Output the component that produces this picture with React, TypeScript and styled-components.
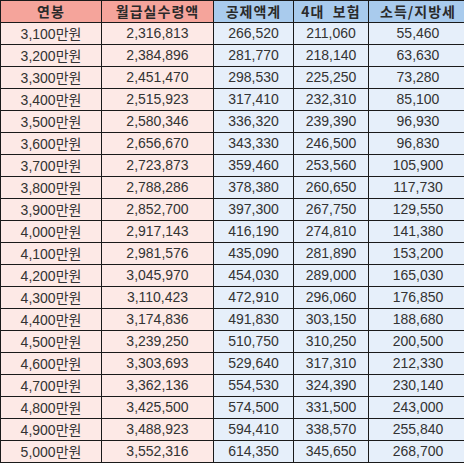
import React from "react";
import styled, { createGlobalStyle } from "styled-components";

const Global = createGlobalStyle`
  html, body { margin: 0; padding: 0; background: #ffffff; }
  body { font-family: "Liberation Sans", Arial, "Noto Sans CJK KR", sans-serif; }
`;

const Table = styled.table`
  border-collapse: collapse;
  table-layout: fixed;
  width: 463px;
  font-size: 14px;
`;

const HeadCell = styled.th<{ $tone: "red" | "blue"; $w: number }>`
  width: ${(p) => p.$w}px;
  height: 21px;
  padding: 0;
  border: 1px solid #1a1a1a;
  background: ${(p) => (p.$tone === "red" ? "#f5a49b" : "#a9cbed")};
  color: #2a2a2a;
  font-family: "Noto Sans CJK KR", "Liberation Sans", sans-serif;
  font-weight: 700;
  font-size: 14px;
  letter-spacing: 1px;
  text-align: center;
  line-height: 19px;
  white-space: pre;
`;

const Cell = styled.td<{ $tone: "red" | "blue" }>`
  height: 21px;
  padding: 0;
  border: 1px solid #1a1a1a;
  background: ${(p) => (p.$tone === "red" ? "#fde9e6" : "#e6effa")};
  color: #333333;
  text-align: center;
  line-height: 19px;
  font-family: "Liberation Sans", Arial, "Noto Sans CJK KR", sans-serif;
  font-size: 14px;
`;

const Unit = styled.span`
  font-family: "Noto Sans CJK KR", sans-serif;
  font-size: 14px;
  letter-spacing: 0px;
`;

const rows: [string, string, string, string, string][] = [
  ["3,100", "2,316,813", "266,520", "211,060", "55,460"],
  ["3,200", "2,384,896", "281,770", "218,140", "63,630"],
  ["3,300", "2,451,470", "298,530", "225,250", "73,280"],
  ["3,400", "2,515,923", "317,410", "232,310", "85,100"],
  ["3,500", "2,580,346", "336,320", "239,390", "96,930"],
  ["3,600", "2,656,670", "343,330", "246,500", "96,830"],
  ["3,700", "2,723,873", "359,460", "253,560", "105,900"],
  ["3,800", "2,788,286", "378,380", "260,650", "117,730"],
  ["3,900", "2,852,700", "397,300", "267,750", "129,550"],
  ["4,000", "2,917,143", "416,190", "274,810", "141,380"],
  ["4,100", "2,981,576", "435,090", "281,890", "153,200"],
  ["4,200", "3,045,970", "454,030", "289,000", "165,030"],
  ["4,300", "3,110,423", "472,910", "296,060", "176,850"],
  ["4,400", "3,174,836", "491,830", "303,150", "188,680"],
  ["4,500", "3,239,250", "510,750", "310,250", "200,500"],
  ["4,600", "3,303,693", "529,640", "317,310", "212,330"],
  ["4,700", "3,362,136", "554,530", "324,390", "230,140"],
  ["4,800", "3,425,500", "574,500", "331,500", "243,000"],
  ["4,900", "3,488,923", "594,410", "338,570", "255,840"],
  ["5,000", "3,552,316", "614,350", "345,650", "268,700"],
];

const heads: { label: string; tone: "red" | "blue"; w: number }[] = [
  { label: "연봉", tone: "red", w: 100 },
  { label: "월급실수령액", tone: "red", w: 111 },
  { label: "공제액계", tone: "blue", w: 79 },
  { label: "4대  보험", tone: "blue", w: 74 },
  { label: "소득/지방세", tone: "blue", w: 98 },
];

export default function App() {
  return (
    <>
      <Global />
      <Table>
        <thead>
          <tr>
            {heads.map((h) => (
              <HeadCell key={h.label} $tone={h.tone} $w={h.w}>
                {h.label}
              </HeadCell>
            ))}
          </tr>
        </thead>
        <tbody>
          {rows.map((r) => (
            <tr key={r[0]}>
              <Cell $tone="red">
                {r[0]}
                <Unit>만원</Unit>
              </Cell>
              <Cell $tone="red">{r[1]}</Cell>
              <Cell $tone="blue">{r[2]}</Cell>
              <Cell $tone="blue">{r[3]}</Cell>
              <Cell $tone="blue">{r[4]}</Cell>
            </tr>
          ))}
        </tbody>
      </Table>
    </>
  );
}
